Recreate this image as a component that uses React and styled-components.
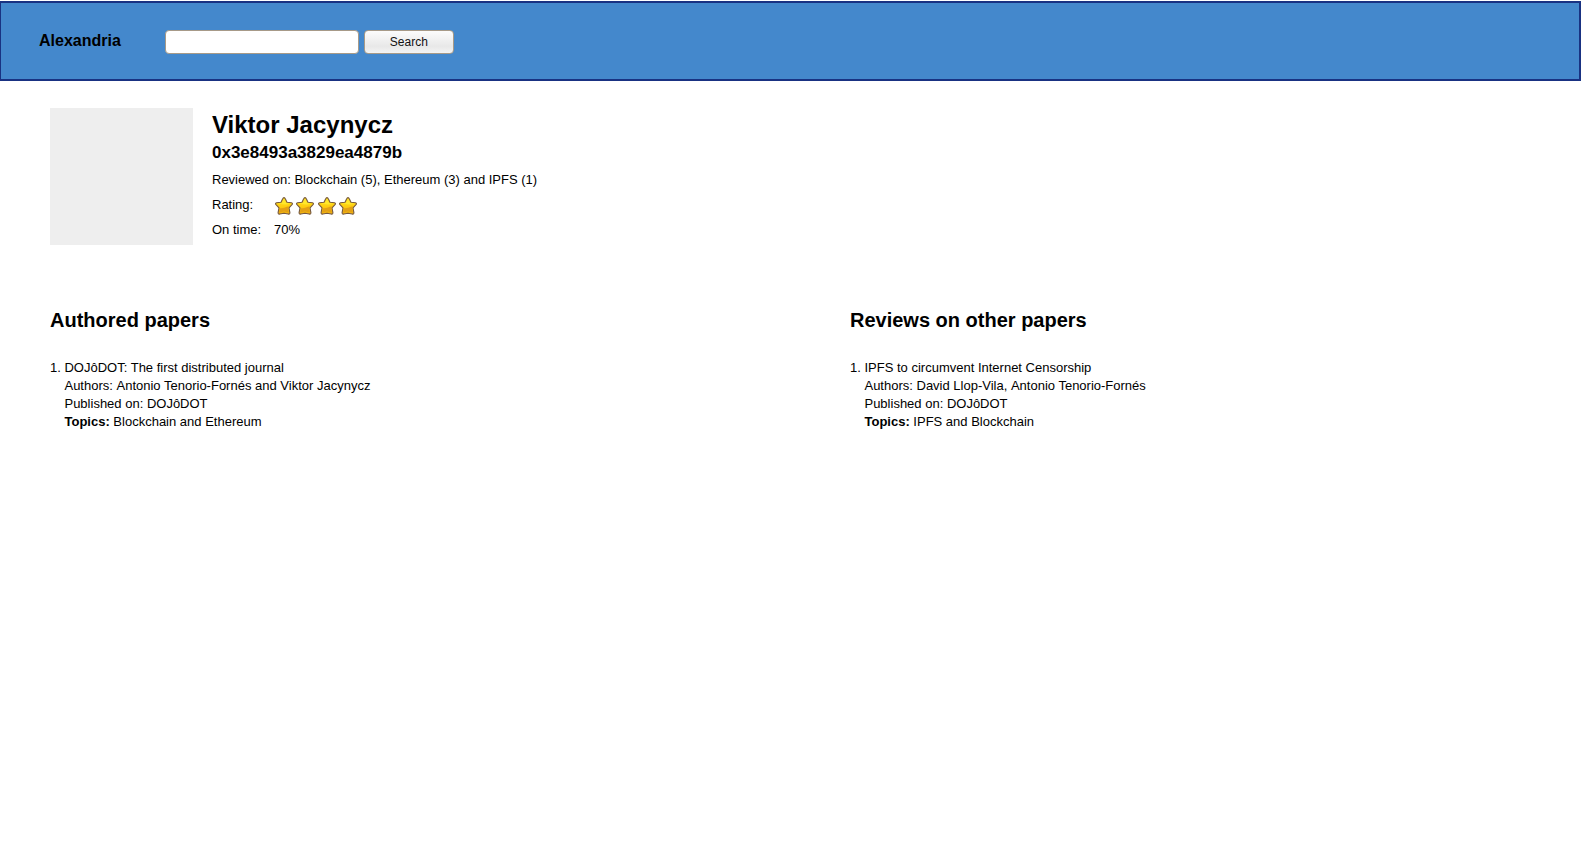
import React from 'react';
import styled, { createGlobalStyle } from 'styled-components';

const GlobalStyle = createGlobalStyle`
  *, *::before, *::after { box-sizing: border-box; }
  body {
    margin: 0;
    background: #fff;
    color: #000;
    font: 13px/18px "Liberation Sans", Arial, sans-serif;
  }
  h1, h2, p, ol, dl, dd { margin: 0; padding: 0; }
`;

const Header = styled.header`
  display: flex;
  align-items: center;
  gap: 44px;
  height: 80px;
  margin: 1px 1px 0 0;
  padding: 0 38px;
  background: #4488cc;
  border: 2px solid #193282;
  border-left-width: 1px;
`;

const Brand = styled.a`
  color: inherit;
  font-size: 16px;
  font-weight: bold;
  text-decoration: none;
`;

const SearchForm = styled.form`
  display: flex;
  gap: 5px;
  padding-top: 2px;
`;

const SearchInput = styled.input`
  width: 194px;
  height: 24px;
  padding: 0 6px;
  background: #fff;
  border: 1px solid #a79a88;
  border-radius: 4px;
  font: 12px "Liberation Sans", Arial, sans-serif;
`;

const SearchButton = styled.button`
  width: 90px;
  height: 24px;
  padding: 0;
  color: #111;
  background: linear-gradient(#fcfcfc 0%, #e8e8e8 70%, #f4f4f4 100%);
  border: 1px solid #a79a88;
  border-radius: 4px;
  font: 12px "Liberation Sans", Arial, sans-serif;
`;

const Profile = styled.section`
  display: flex;
  gap: 19px;
  padding: 27px 50px 0;
`;

const Avatar = styled.div`
  flex: none;
  width: 143px;
  height: 137px;
  background: #eee;
`;

const Name = styled.h1`
  padding-top: 3px;
  font-size: 24px;
  line-height: 28px;
`;

const Address = styled.p`
  font-size: 17px;
  font-weight: bold;
  line-height: 28px;
`;

const Line = styled.p`
  line-height: 25px;
`;

const Stats = styled.dl`
  display: grid;
  grid-template-columns: 62px auto;
  justify-content: start;
  line-height: 25px;
`;

const Stars = styled.dd`
  display: flex;
  justify-content: space-between;
  width: 84px;
  padding-top: 4px;
`;

const StarIcon = styled.svg`
  display: block;
  width: 20px;
  height: 20px;
`;

const Columns = styled.main`
  display: grid;
  grid-template-columns: 1fr 1fr;
  gap: 80px;
  padding: 62px 12px 40px 50px;
`;

const SectionTitle = styled.h2`
  font-size: 20px;
  line-height: 26px;
`;

const PaperList = styled.ol`
  padding-top: 26px;
  list-style: none;
  counter-reset: paper;
`;

const PaperItem = styled.li`
  display: flex;
  counter-increment: paper;

  &::before {
    content: counter(paper) '. ';
    flex: none;
    white-space: pre;
  }
`;

const Author = styled.span`
  display: inline-block;
`;

function Star() {
  return (
    <StarIcon viewBox="0 0 20 20" aria-hidden="true">
      <defs>
        <linearGradient id="starFill" x1="0" y1="0" x2="0" y2="1">
          <stop offset="0" stopColor="#ffe02a" />
          <stop offset="0.5" stopColor="#ffd010" />
          <stop offset="1" stopColor="#efae10" />
        </linearGradient>
      </defs>
      <path
        d="M10 1.6 Q10.8 1.6 11.3 2.8 L13 6.2 L17.5 6.8 Q19.2 7.3 18 8.7 L15 11.8 L15.9 16.6 Q16 18.6 14.2 18 L10 17.2 L5.8 18 Q4 18.6 4.1 16.6 L5 11.8 L2 8.7 Q.8 7.3 2.5 6.8 L7 6.2 L8.7 2.8 Q9.2 1.6 10 1.6Z"
        fill="url(#starFill)"
        stroke="#75583f"
        strokeWidth="1.1"
        strokeLinejoin="round"
      />
      <path
        d="M5.9 12.2 Q8.4 12.6 11 11.5 Q13 10.5 15 10.6 L14.1 11.8 L14.9 16.6 L10 15.6 L5.1 16.6Z"
        fill="#e3a016"
      />
      <path d="M10 3 L12 7 L16.5 7.7 L11.5 8.5 L3.5 7.7 L8 7Z" fill="#ffe92c" />
    </StarIcon>
  );
}

function AuthorNames({ names }) {
  return names.map((name, i) => (
    <React.Fragment key={name}>
      {i > 0 && ' '}
      <Author>{name}</Author>
    </React.Fragment>
  ));
}

function PaperSection({ title, papers }) {
  return (
    <section>
      <SectionTitle>{title}</SectionTitle>
      <PaperList>
        {papers.map((paper) => (
          <PaperItem key={paper.title}>
            <div>
              <p>{paper.title}</p>
              <p>Authors: <AuthorNames names={paper.authors} /></p>
              <p>Published on: {paper.journal}</p>
              <p><b>Topics:</b> {paper.topics}</p>
            </div>
          </PaperItem>
        ))}
      </PaperList>
    </section>
  );
}

const authored = [
  {
    title: 'DOJôDOT: The first distributed journal',
    authors: ['Antonio Tenorio-Fornés', 'and Viktor Jacynycz'],
    journal: 'DOJôDOT',
    topics: 'Blockchain and Ethereum',
  },
];

const reviewed = [
  {
    title: 'IPFS to circumvent Internet Censorship',
    authors: ['David Llop-Vila,', 'Antonio Tenorio-Fornés'],
    journal: 'DOJôDOT',
    topics: 'IPFS and Blockchain',
  },
];

export default function App() {
  return (
    <>
      <GlobalStyle />
      <Header>
        <Brand href="#">Alexandria</Brand>
        <SearchForm role="search" onSubmit={(event) => event.preventDefault()}>
          <SearchInput type="text" aria-label="Search papers" />
          <SearchButton type="submit">Search</SearchButton>
        </SearchForm>
      </Header>
      <Profile>
        <Avatar />
        <div>
          <Name>Viktor Jacynycz</Name>
          <Address>0x3e8493a3829ea4879b</Address>
          <Line>Reviewed on: Blockchain (5), Ethereum (3) and IPFS (1)</Line>
          <Stats>
            <dt>Rating:</dt>
            <Stars aria-label="4 stars">
              {[1, 2, 3, 4].map((n) => <Star key={n} />)}
            </Stars>
            <dt>On time:</dt>
            <dd>70%</dd>
          </Stats>
        </div>
      </Profile>
      <Columns>
        <PaperSection title="Authored papers" papers={authored} />
        <PaperSection title="Reviews on other papers" papers={reviewed} />
      </Columns>
    </>
  );
}
